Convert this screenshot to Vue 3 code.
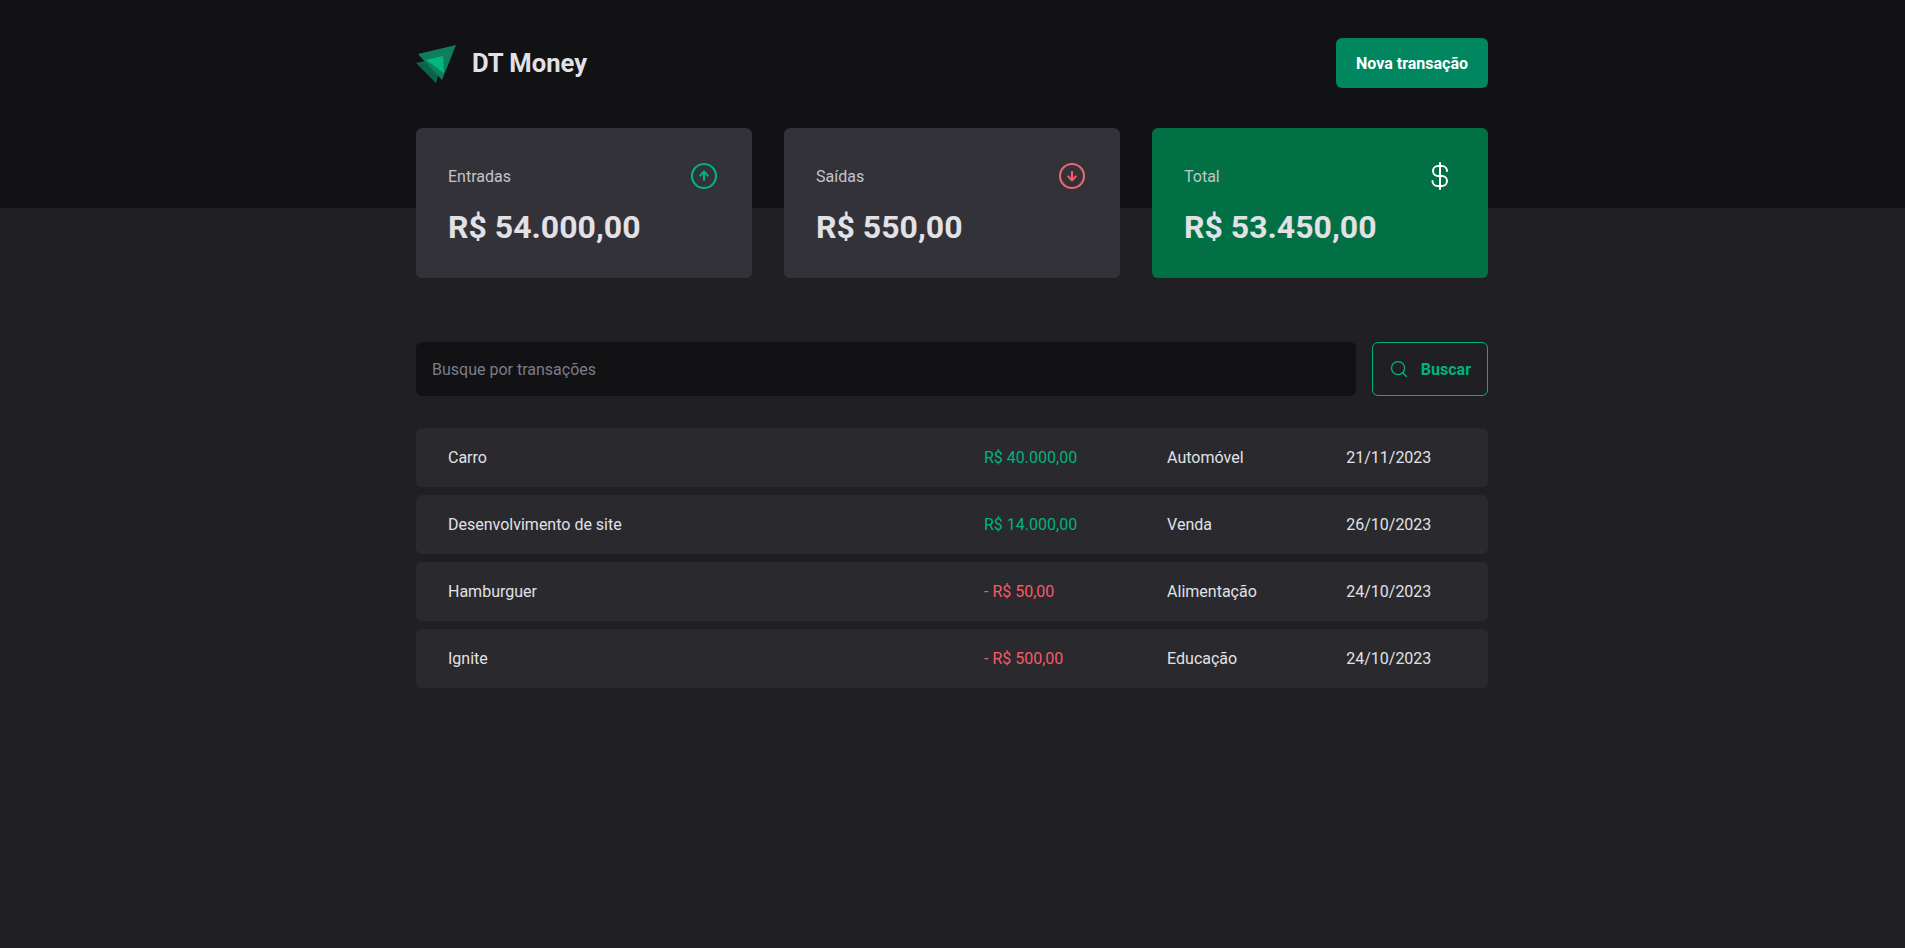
<template>
  <div class="page">
    <header class="header">
      <div class="header-content">
        <div class="logo">
          <svg width="41" height="40" viewBox="0 0 41 40">
            <path d="M0 20 L20 40 L27 14 Z" fill="#0a6548" />
            <path d="M40 2 L2 11 L26 37 Z" fill="#0f7f5b" />
            <path d="M10 17 L27 13 L28 30 Z" fill="#00b880" />
          </svg>
          <span>DT Money</span>
        </div>
        <button type="button" class="new-button">Nova transação</button>
      </div>
    </header>

    <section class="summary">
      <div
        v-for="card in summary"
        :key="card.label"
        class="summary-card"
        :class="{ 'is-total': card.icon === 'total' }"
      >
        <header class="summary-top">
          <span>{{ card.label }}</span>
          <svg v-if="card.icon === 'up'" width="32" height="32" viewBox="0 0 256 256" fill="none" stroke="#00b37e" stroke-width="17" stroke-linecap="round" stroke-linejoin="round">
            <circle cx="128" cy="128" r="96" />
            <path d="M98 124 L128 94 L158 124" />
            <path d="M128 160 L128 94" />
          </svg>
          <svg v-else-if="card.icon === 'down'" width="32" height="32" viewBox="0 0 256 256" fill="none" stroke="#f75a68" stroke-width="17" stroke-linecap="round" stroke-linejoin="round">
            <circle cx="128" cy="128" r="96" stroke="#e8696e" />
            <path d="M98 132 L128 162 L158 132" />
            <path d="M128 96 L128 162" />
          </svg>
          <svg v-else width="32" height="32" viewBox="0 0 256 256" fill="none" stroke="#fff" stroke-width="16" stroke-linecap="round" stroke-linejoin="round">
            <path d="M128 24 L128 232" />
            <path d="M184 88 A40 40 0 0 0 144 48 H112 A40 40 0 0 0 112 128 H144 A40 40 0 0 1 144 208 H108 A40 40 0 0 1 68 168" />
          </svg>
        </header>
        <strong>{{ card.value }}</strong>
      </div>
    </section>

    <main class="transactions">
      <form class="search" @submit.prevent>
        <input type="text" placeholder="Busque por transações">
        <button type="submit">
          <svg width="20" height="20" viewBox="0 0 256 256" fill="none" stroke="#00b37e" stroke-width="16" stroke-linecap="round" stroke-linejoin="round">
            <circle cx="116" cy="116" r="84" />
            <path d="M175.4 175.4 L224 224" />
          </svg>
          Buscar
        </button>
      </form>

      <table class="table">
        <tbody>
          <tr v-for="row in rows" :key="row.name">
            <td class="name">{{ row.name }}</td>
            <td :class="row.out ? 'outcome' : 'income'">{{ row.amount }}</td>
            <td>{{ row.category }}</td>
            <td>{{ row.date }}</td>
          </tr>
        </tbody>
      </table>
    </main>
  </div>
</template>

<script setup>
const summary = [
  { label: 'Entradas', value: 'R$ 54.000,00', icon: 'up' },
  { label: 'Saídas', value: 'R$ 550,00', icon: 'down' },
  { label: 'Total', value: 'R$ 53.450,00', icon: 'total' }
]

const rows = [
  { name: 'Carro', amount: 'R$ 40.000,00', category: 'Automóvel', date: '21/11/2023', out: false },
  { name: 'Desenvolvimento de site', amount: 'R$ 14.000,00', category: 'Venda', date: '26/10/2023', out: false },
  { name: 'Hamburguer', amount: '- R$ 50,00', category: 'Alimentação', date: '24/10/2023', out: true },
  { name: 'Ignite', amount: '- R$ 500,00', category: 'Educação', date: '24/10/2023', out: true }
]
</script>

<style>
body {
  background: #202024;
}
</style>

<style scoped>
.page {
  min-height: 948px;
  padding-right: 1px;
  background: #202024;
  color: #e1e1e6;
  font-family: Roboto, "Liberation Sans", sans-serif;
  font-size: 16px;
}

.header {
  height: 208px;
  margin-right: -1px;
  padding-top: 38px;
  box-sizing: border-box;
  background: #121214;
}

.header-content,
.summary,
.transactions {
  width: 1072px;
  margin-left: auto;
  margin-right: auto;
}

.header-content {
  display: flex;
  align-items: center;
  justify-content: space-between;
  position: relative;
  left: -0.5px;
}

.logo {
  display: flex;
  align-items: center;
  gap: 15px;
  font-size: 25.6px;
  font-weight: 700;
}

.new-button {
  height: 50px;
  padding: 0 20px;
  border: 0;
  border-radius: 6px;
  background: #00875f;
  color: #fff;
  font: 700 16px Roboto, sans-serif;
}

.summary {
  display: grid;
  grid-template-columns: repeat(3, 1fr);
  gap: 32px;
  margin-top: -80px;
}

.summary-card {
  height: 150px;
  box-sizing: border-box;
  padding: 32px;
  border-radius: 6px;
  background: #323238;
}

.summary-card.is-total {
  background: #017045;
}

.summary-top {
  display: flex;
  align-items: center;
  justify-content: space-between;
  color: #c4c4cc;
}

.summary-card strong {
  display: block;
  margin-top: 16px;
  font-size: 32px;
  font-weight: 700;
}

.transactions {
  margin-top: 64px;
}

.search {
  display: flex;
  gap: 16px;
}

.search input {
  flex: 1;
  height: 54px;
  box-sizing: border-box;
  padding: 16px;
  border: 0;
  border-radius: 6px;
  background: #121214;
  color: #c4c4cc;
  font: 400 16px Roboto, sans-serif;
}

.search input::placeholder {
  color: #7c7c8a;
}

.search button {
  display: flex;
  align-items: center;
  gap: 12px;
  height: 54px;
  padding: 0 16px;
  box-sizing: border-box;
  border: 1px solid #00b37e;
  border-radius: 6px;
  background: transparent;
  color: #00b37e;
  font: 700 16px Roboto, sans-serif;
}

.table {
  width: 100%;
  margin-top: 24px;
  border-collapse: separate;
  border-spacing: 0 8px;
}

.table td {
  padding: 20px 32px;
  background: #29292e;
  color: #e1e1e6;
}

.table td.name {
  width: 50%;
  border-radius: 6px 0 0 6px;
}

.table td:last-child {
  border-radius: 0 6px 6px 0;
}

.table td.income {
  color: #00b37e;
}

.table td.outcome {
  color: #f75a68;
}
</style>
